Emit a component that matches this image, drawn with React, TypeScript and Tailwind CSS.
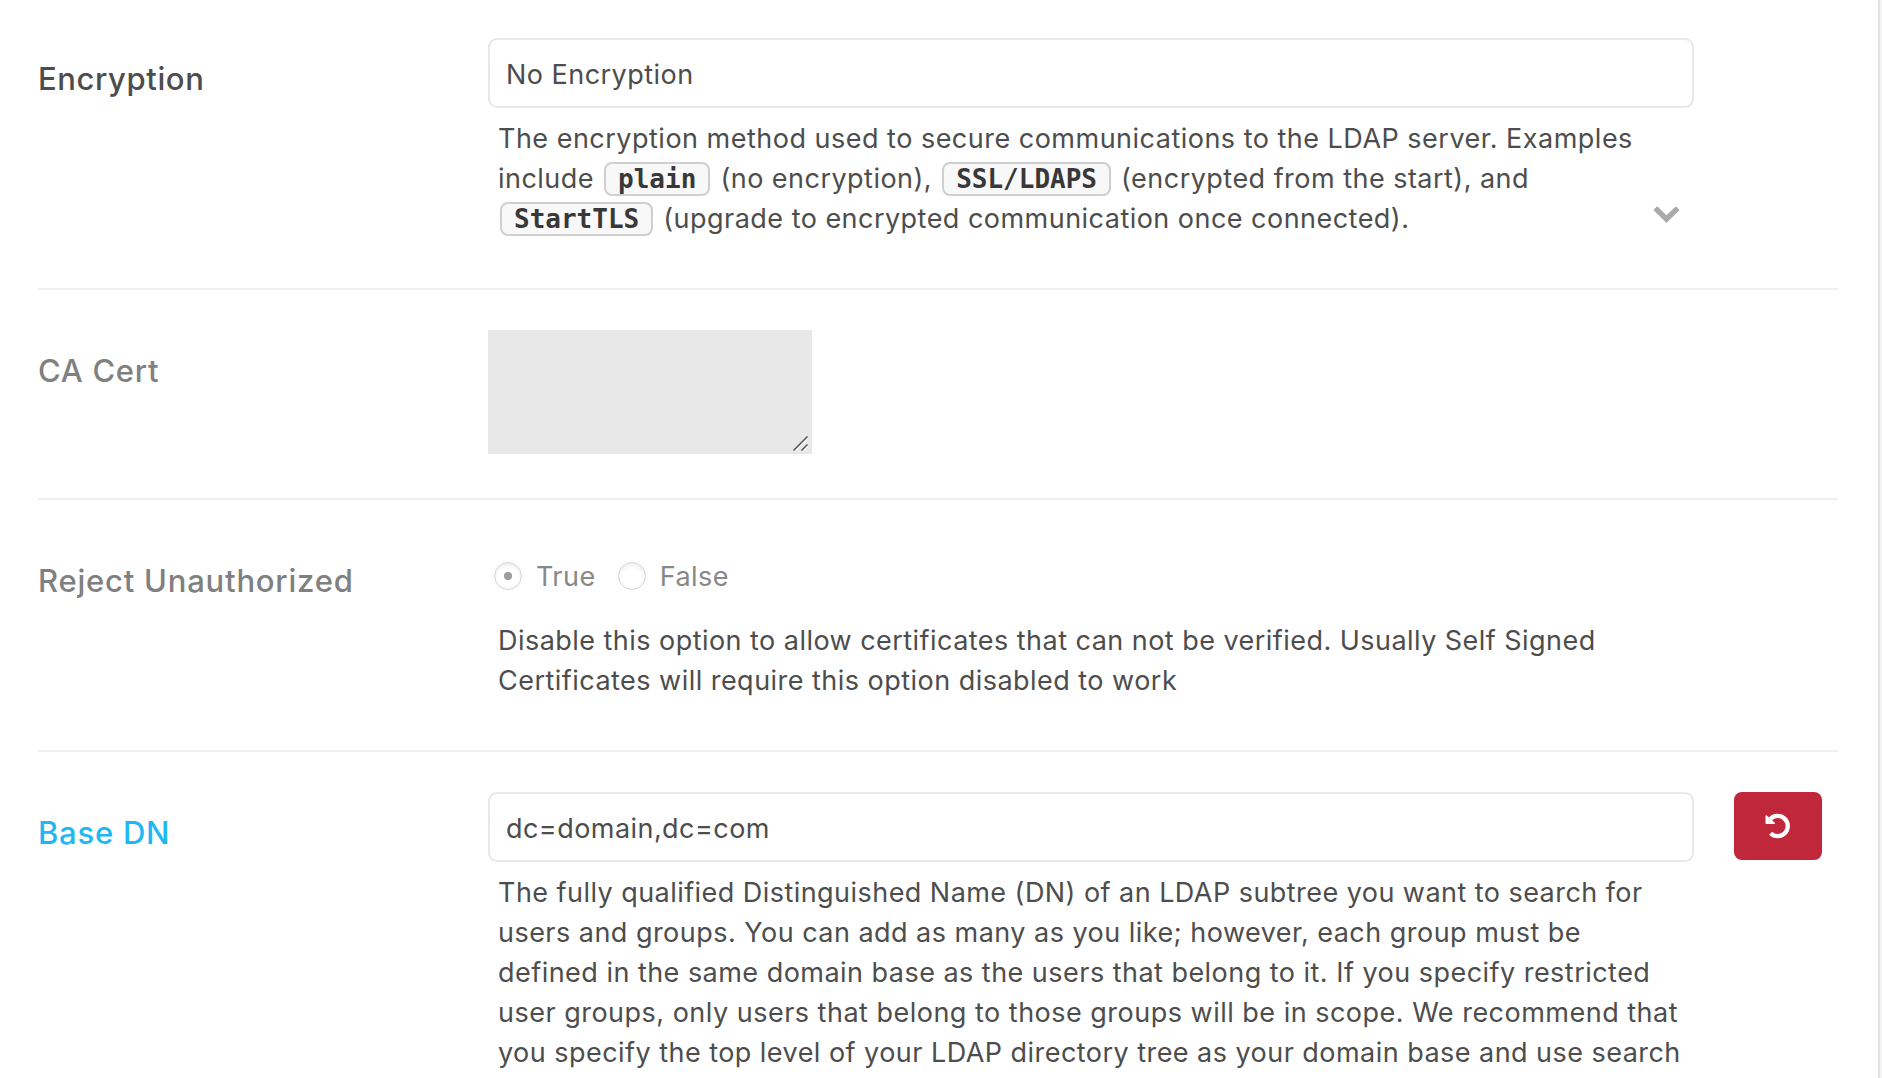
import type { ReactNode } from "react";

function Row({
  label,
  labelClass,
  className = "",
  children,
}: {
  label: string;
  labelClass: string;
  className?: string;
  children: ReactNode;
}) {
  return (
    <section className={`flex items-start border-[#efefef] ${className}`}>
      <h3 className={`mt-[21px] w-[450px] shrink-0 text-[31px] leading-10 font-medium ${labelClass}`}>
        {label}
      </h3>
      {children}
    </section>
  );
}

function TextField({ value, tracking }: { value: string; tracking: string }) {
  return (
    <div className={`h-[70px] w-[1206px] rounded-[9px] border-2 border-[#e8e8e8] pt-[15px] pl-4 leading-10 ${tracking}`}>
      {value}
    </div>
  );
}

function Code({ children }: { children: string }) {
  return (
    <code className="mx-[2px] inline-flex h-[34px] items-center rounded-lg border-2 border-[#cfcfcf] bg-[#f8f8f8] px-3 align-baseline font-['DejaVu_Sans_Mono',monospace] text-[26px] leading-[30px] font-bold tracking-normal text-[#383838]">
      {children}
    </code>
  );
}

function Help({ className = "", children }: { className?: string; children: ReactNode }) {
  return <div className={`pl-[10px] leading-10 whitespace-nowrap ${className}`}>{children}</div>;
}

function Radio({ label, checked = false }: { label: string; checked?: boolean }) {
  return (
    <div className="flex items-start text-[#888]">
      <span className="mt-[6px] mr-[14px] flex size-7 items-center justify-center rounded-full border border-[#d4d4d4] shadow-[inset_0_2px_4px_rgba(0,0,0,0.08)]">
        {checked && <span className="size-2 rounded-full bg-[#9d9d9d]" />}
      </span>
      <span className="pt-px leading-10">{label}</span>
    </div>
  );
}

function UndoIcon() {
  return (
    <svg className="size-[26px]" viewBox="0 0 26 26" fill="none" aria-hidden="true">
      <path d="M5.2 6.2 A10.1 10.1 0 1 1 5.6 20.2" stroke="#fff" strokeWidth="4.3" strokeLinejoin="round" />
      <path d="M1.3 3 L9.2 10.3 L1.3 10.3 Z" fill="#fff" stroke="#fff" strokeWidth="1.6" strokeLinejoin="round" />
    </svg>
  );
}

export default function App() {
  return (
    <div className="h-[1078px] overflow-hidden bg-[#f3f3f3] pr-[2px]">
      <main className="h-full border-r-2 border-[#e3e3e3] bg-white pr-10 pl-[38px] font-[Inter,sans-serif] text-[27px] tracking-[0.47px] text-[#4d4d4d]">
        <Row label="Encryption" labelClass="tracking-[0.6px] text-[#4d4d4d]" className="h-[290px] border-b-2 pt-[38px]">
          <div className="relative">
            <TextField value="No Encryption" tracking="tracking-[0.47px]" />
            <Help className="mt-[11px]">
              <p className="h-10 tracking-[0.49px]">
                The encryption method used to secure communications to the LDAP server. Examples
              </p>
              <p className="h-10">
                include <Code>plain</Code> (no encryption), <Code>SSL/LDAPS</Code> (encrypted from the start), and
              </p>
              <p className="h-10">
                <Code>StartTLS</Code> (upgrade to encrypted communication once connected).
              </p>
            </Help>
            <svg className="absolute top-[168px] right-[14px] h-[18px] w-[27px]" viewBox="0 0 27 18" aria-hidden="true">
              <path
                d="M4.2 1.2 L13.5 10.3 L22.8 1.2 L25.6 4 L13.5 16 L1.4 4 Z"
                fill="#aaa"
                stroke="#aaa"
                strokeWidth="1.4"
                strokeLinejoin="round"
              />
            </svg>
          </div>
        </Row>

        <Row label="CA Cert" labelClass="tracking-[0.7px] text-[#808080]" className="h-[210px] border-b-2 pt-10">
          <div className="flex h-[124px] w-[324px] items-end justify-end bg-[#e8e8e8] pr-1 pb-[3px]">
            <svg className="size-[15px]" viewBox="0 0 15 15" fill="none" aria-hidden="true">
              <path d="M2 15 L15 2 M10 15 L15 10" stroke="#fff" strokeWidth="1.2" />
              <path d="M0.5 14.5 L14.5 0.5 M8.5 14.5 L14.5 8.5" stroke="#555" strokeWidth="1.5" />
            </svg>
          </div>
        </Row>

        <Row label="Reject Unauthorized" labelClass="tracking-[0.78px] text-[#808080]" className="h-[252px] border-b-2 pt-10">
          <div>
            <div className="flex h-14 gap-[22px] pt-4 pl-[6px]">
              <Radio label="True" checked />
              <Radio label="False" />
            </div>
            <Help className="mt-[25px]">
              <p className="tracking-[0.46px]">
                Disable this option to allow certificates that can not be verified. Usually Self Signed
              </p>
              <p>Certificates will require this option disabled to work</p>
            </Help>
          </div>
        </Row>

        <Row label="Base DN" labelClass="tracking-[0.75px] text-[#21b8f1]" className="pt-10">
          <div>
            <TextField value="dc=domain,dc=com" tracking="tracking-[0.45px]" />
            <Help className="mt-[11px]">
              <p className="tracking-[0.45px]">
                The fully qualified Distinguished Name (DN) of an LDAP subtree you want to search for
              </p>
              <p>users and groups. You can add as many as you like; however, each group must be</p>
              <p>defined in the same domain base as the users that belong to it. If you specify restricted</p>
              <p className="tracking-[0.49px]">
                user groups, only users that belong to those groups will be in scope. We recommend that
              </p>
              <p className="tracking-[0.46px]">
                you specify the top level of your LDAP directory tree as your domain base and use search
              </p>
            </Help>
          </div>
          <button className="ml-10 flex h-[68px] w-[88px] shrink-0 items-center justify-center rounded-lg bg-[#c0273b]">
            <UndoIcon />
          </button>
        </Row>
      </main>
    </div>
  );
}
